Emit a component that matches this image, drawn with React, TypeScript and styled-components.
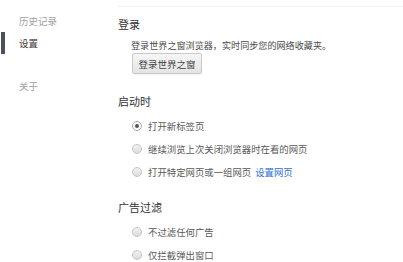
import React from "react"
import styled, { createGlobalStyle } from "styled-components"

const GlobalStyle = createGlobalStyle`
  html, body {
    margin: 0;
    padding: 0;
    background: #fff;
  }
  body {
    font-family: "Noto Sans CJK SC", "Noto Sans", sans-serif;
  }
`

const Page = styled.div`
  display: flex;
  width: 403px;
  height: 262px;
  overflow: hidden;
`

const Sidebar = styled.nav`
  width: 117px;
  flex-shrink: 0;
  display: flex;
  flex-direction: column;
  padding-top: 10px;
  box-sizing: border-box;
`

const NavItem = styled.div<{ $active?: boolean; $gap?: number }>`
  height: 22px;
  line-height: 22px;
  margin-left: 1px;
  margin-top: ${p => p.$gap || 0}px;
  padding-left: 14px;
  border-left: 4px solid ${p => (p.$active ? "#4a515b" : "transparent")};
  font-size: 9.5px;
  color: ${p => (p.$active ? "#3a3a3a" : "#a0a0a0")};
`

const Main = styled.main`
  flex: 1;
  margin-top: 6px;
  border-top: 1px solid #f1f1f1;
`

const Section = styled.section<{ $top: number }>`
  margin-top: ${p => p.$top}px;
`

const Heading = styled.div`
  font-size: 11px;
  line-height: 16px;
  height: 16px;
  margin-left: 1px;
  color: #333;
`

const Desc = styled.div`
  margin: 6px 0 0 14px;
  font-size: 9.1px;
  line-height: 14px;
  color: #4a4a4a;
  white-space: nowrap;
`

const Button = styled.button`
  display: block;
  margin: 1px 0 0 15px;
  width: 70px;
  height: 21px;
  padding: 0;
  border: 1px solid #c9c9c9;
  border-radius: 2px;
  background: linear-gradient(#f6f6f6, #e4e4e4);
  font-family: inherit;
  font-size: 9.5px;
  color: #444;
  box-shadow: 0 1px 0 rgba(0, 0, 0, 0.04);
`

const RadioList = styled.div`
  margin-top: 5px;
  display: flex;
  flex-direction: column;
`

const RadioRow = styled.label`
  display: flex;
  align-items: center;
  gap: 6px;
  height: 23px;
  padding-left: 15px;
  font-size: 9.4px;
  color: #595959;
  white-space: nowrap;
`

const Radio = styled.span<{ $checked?: boolean }>`
  width: 10px;
  height: 10px;
  border-radius: 50%;
  box-sizing: border-box;
  border: 1px solid ${p => (p.$checked ? "#a9a9a9" : "#c6c6c6")};
  background: ${p => (p.$checked ? "#fff" : "linear-gradient(#f2f2f2, #dcdcdc)")};
  display: flex;
  align-items: center;
  justify-content: center;
  flex-shrink: 0;

  &::after {
    content: "";
    display: ${p => (p.$checked ? "block" : "none")};
    width: 4px;
    height: 4px;
    border-radius: 50%;
    background: #555;
  }
`

const Link = styled.a`
  color: #2f6fd0;
  margin-left: 4px;
  text-decoration: none;
`

const App: React.FC = () => {
  return (
    <Page>
      <GlobalStyle />
      <Sidebar>
        <NavItem>历史记录</NavItem>
        <NavItem $active>设置</NavItem>
        <NavItem $gap={21}>关于</NavItem>
      </Sidebar>
      <Main>
        <Section $top={9}>
          <Heading>登录</Heading>
          <Desc>登录世界之窗浏览器，实时同步您的网络收藏夹。</Desc>
          <Button>登录世界之窗</Button>
        </Section>

        <Section $top={19}>
          <Heading>启动时</Heading>
          <RadioList>
            <RadioRow>
              <Radio $checked />
              <span>打开新标签页</span>
            </RadioRow>
            <RadioRow>
              <Radio />
              <span>继续浏览上次关闭浏览器时在看的网页</span>
            </RadioRow>
            <RadioRow>
              <Radio />
              <span>
                打开特定网页或一组网页
                <Link href="#">设置网页</Link>
              </span>
            </RadioRow>
          </RadioList>
        </Section>

        <Section $top={16}>
          <Heading>广告过滤</Heading>
          <RadioList>
            <RadioRow>
              <Radio />
              <span>不过滤任何广告</span>
            </RadioRow>
            <RadioRow>
              <Radio />
              <span>仅拦截弹出窗口</span>
            </RadioRow>
          </RadioList>
        </Section>
      </Main>
    </Page>
  )
}

export default App
